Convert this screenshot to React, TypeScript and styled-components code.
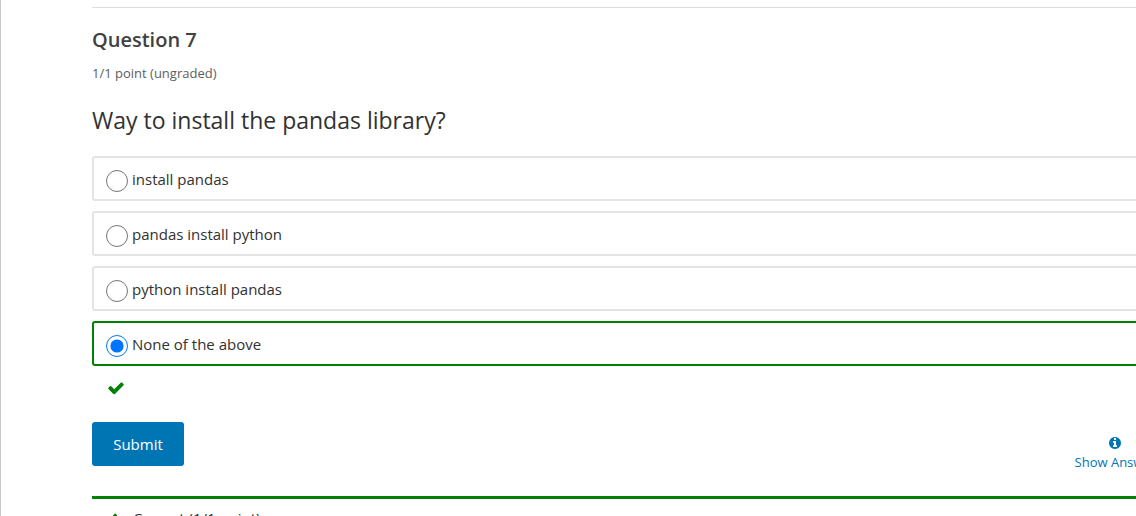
import React, { useState } from "react";
import styled, { createGlobalStyle } from "styled-components";

const GlobalStyle = createGlobalStyle`
  * { box-sizing: border-box; }
  body {
    margin: 0;
    background: #fff;
    color: #313131;
    font-family: "Segoe UI", "Open Sans", "Noto Sans", sans-serif;
  }
`;

const Page = styled.main`
  height: 100vh;
  overflow: hidden;
  border-left: 1px solid #c8c8c8;
  padding: 7px 0 0 91px;
`;

const Problem = styled.section`
  width: calc(100% + 40px);
  border-top: 1px solid #ddd;
  padding-top: 17px;
`;

const Title = styled.h3`
  margin: 0;
  font-size: 20px;
  line-height: 30px;
  font-weight: 600;
  color: #414141;
`;

const Progress = styled.div`
  margin-top: 8px;
  font-size: 13px;
  line-height: 20px;
  color: #5e5e5e;
`;

const Choices = styled.fieldset`
  margin: 0;
  padding: 0;
  border: 0;
  min-width: 0;
`;

const Prompt = styled.legend`
  padding: 20px 0 18px;
  font-size: 23px;
  line-height: 35px;
`;

const Choice = styled.label<{ $correct: boolean }>`
  display: flex;
  align-items: center;
  gap: 4px;
  height: 45px;
  margin-bottom: 10px;
  padding: 0 12px;
  border: 2px solid ${(p) => (p.$correct ? "#008100" : "#e4e4e4")};
  border-radius: 3px;
  font-size: 15px;
  line-height: 24px;
  cursor: pointer;
`;

const Radio = styled.input`
  width: 22px;
  height: 22px;
  margin: 4px 0 0;
`;

const Status = styled.div`
  display: flex;
  padding: 3px 15px 25px;
  color: #008100;
`;

const Actions = styled.div`
  display: flex;
  align-items: flex-start;
  justify-content: space-between;
  padding-right: 20px;
`;

const Submit = styled.button`
  width: 92px;
  height: 44px;
  border: 0;
  border-radius: 3px;
  background: #0075b4;
  color: #fff;
  font: inherit;
  font-size: 15px;
  cursor: pointer;
`;

const ShowAnswer = styled.button`
  display: flex;
  flex-direction: column;
  align-items: center;
  padding: 14px 0 0;
  border: 0;
  background: none;
  color: #0075b4;
  font: inherit;
  font-size: 13px;
  line-height: 24px;
  white-space: nowrap;
  cursor: pointer;
`;

const Notice = styled.div`
  display: flex;
  align-items: center;
  gap: 15px;
  margin-top: 22px;
  padding: 9px 12px;
  border-top: 3px solid #008100;
  font-size: 15px;
  line-height: 20px;

  svg {
    color: #008100;
  }
`;

const CheckIcon = ({ size }: { size: number }) => (
  <svg width={size} height={size} viewBox="0 0 1792 1792" fill="currentColor" aria-hidden="true">
    <path d="M1671 566q0 40-28 68l-724 724-136 136q-28 28-68 28t-68-28l-136-136-362-362q-28-28-28-68t28-68l136-136q28-28 68-28t68 28l294 295 656-657q28-28 68-28t68 28l136 136q28 28 28 68z" />
  </svg>
);

const InfoIcon = () => (
  <svg width="14" height="14" viewBox="0 0 1792 1792" fill="currentColor" aria-hidden="true">
    <path d="M1152 1376v-160q0-14-9-23t-23-9h-96v-512q0-14-9-23t-23-9h-320q-14 0-23 9t-9 23v160q0 14 9 23t23 9h96v320h-96q-14 0-23 9t-9 23v160q0 14 9 23t23 9h448q14 0 23-9t9-23zm-128-896v-192q0-14-9-23t-23-9h-192q-14 0-23 9t-9 23v192q0 14 9 23t23 9h192q14 0 23-9t9-23zm640 416q0 209-103 385.5t-279.5 279.5-385.5 103-385.5-103-279.5-279.5-103-385.5 103-385.5 279.5-279.5 385.5-103 385.5 103 279.5 279.5 103 385.5z" />
  </svg>
);

const options = ["install pandas", "pandas install python", "python install pandas", "None of the above"];
const correctIndex = 3;

export default function App() {
  const [selected, setSelected] = useState(correctIndex);
  return (
    <>
      <GlobalStyle />
      <Page>
        <Problem>
          <Title>Question 7</Title>
          <Progress>1/1 point (ungraded)</Progress>
          <Choices>
            <Prompt>Way to install the pandas library?</Prompt>
            {options.map((text, i) => (
              <Choice key={text} htmlFor={`choice-${i}`} $correct={i === correctIndex && selected === i}>
                <Radio
                  type="radio"
                  id={`choice-${i}`}
                  name="answer"
                  checked={selected === i}
                  onChange={() => setSelected(i)}
                />
                {text}
              </Choice>
            ))}
          </Choices>
          <Status>
            <CheckIcon size={18} />
          </Status>
          <Actions>
            <Submit type="button">Submit</Submit>
            <ShowAnswer type="button">
              <InfoIcon />
              Show Answer
            </ShowAnswer>
          </Actions>
          <Notice>
            <CheckIcon size={14} />
            Correct (1/1 point)
          </Notice>
        </Problem>
      </Page>
    </>
  );
}
